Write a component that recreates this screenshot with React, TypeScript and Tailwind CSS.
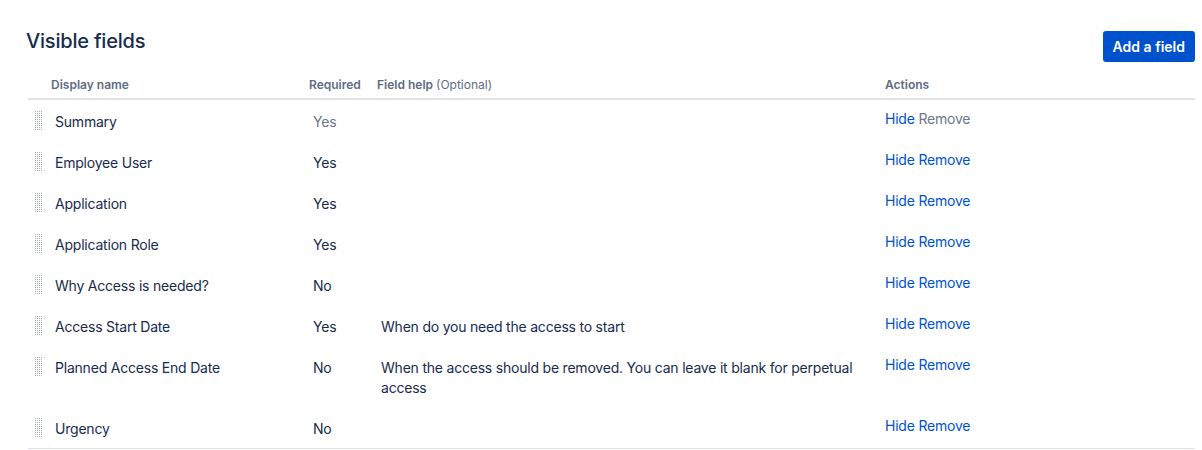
import React from "react"

type Field = {
  name: string
  required: string
  help?: string
  locked?: boolean
}

const fields: Field[] = [
  { name: "Summary", required: "Yes", locked: true },
  { name: "Employee User", required: "Yes" },
  { name: "Application", required: "Yes" },
  { name: "Application Role", required: "Yes" },
  { name: "Why Access is needed?", required: "No" },
  { name: "Access Start Date", required: "Yes", help: "When do you need the access to start" },
  {
    name: "Planned Access End Date",
    required: "No",
    help: "When the access should be removed. You can leave it blank for perpetual access",
  },
  { name: "Urgency", required: "No" },
]

function DragHandle() {
  const dots = []
  for (let r = 0; r < 10; r++) {
    for (let c = 0; c < 4; c++) {
      dots.push(<rect key={`${r}-${c}`} x={c * 2} y={r * 2} width="1" height="1" />)
    }
  }
  return (
    <svg width="8" height="20" viewBox="0 0 8 20" className="fill-[#a5adba]">
      {dots}
    </svg>
  )
}

export default function App() {
  return (
    <div
      className="min-h-[450px] w-[1202px] bg-white pl-[26px] pr-[7px] pt-[29px] text-[#172b4d]"
      style={{ fontFamily: "Inter, 'Liberation Sans', sans-serif" }}
    >
      <div className="flex items-start justify-between">
        <h2 className="text-[20px] font-medium leading-6 tracking-[-0.01em]">Visible fields</h2>
        <button className="mt-[2px] h-[31px] rounded-[3px] bg-[#0052cc] px-[10px] text-[14px] font-semibold text-white">
          Add a field
        </button>
      </div>

      <div className="ml-[2px] mt-[15px]">
        <div className="grid grid-cols-[23px_258px_68px_508px_1fr] border-b-2 border-[#dfe1e6] pb-[5px] text-[12px] font-semibold leading-4 text-[#5e6c84]">
          <div />
          <div>Display name</div>
          <div>Required</div>
          <div>
            Field help <span className="font-normal">(Optional)</span>
          </div>
          <div>Actions</div>
        </div>

        <div className="border-b border-[#dfe1e6]">
          {fields.map((f) => (
            <div
              key={f.name}
              className="grid grid-cols-[23px_258px_68px_508px_1fr] text-[14px] leading-5 tracking-[-0.015em]"
            >
              <div className="pl-[7px] pt-[11px]">
                <DragHandle />
              </div>
              <div className="pb-[9px] pl-1 pt-3">{f.name}</div>
              <div className={`pb-[9px] pl-1 pt-3 ${f.locked ? "text-[#6b778c]" : ""}`}>{f.required}</div>
              <div className="pb-[9px] pl-1 pt-3">{f.help}</div>
              <div className="pt-[9px]">
                <span className="text-[#0052cc]">Hide</span>{" "}
                <span className={f.locked ? "text-[#6b778c]" : "text-[#0052cc]"}>Remove</span>
              </div>
            </div>
          ))}
        </div>
      </div>
    </div>
  )
}
